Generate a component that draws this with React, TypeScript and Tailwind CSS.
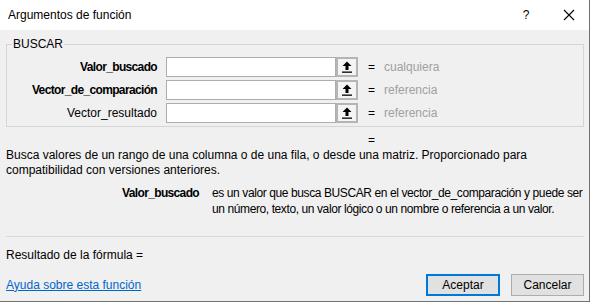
const RefButton = () => (
  <div className="w-[22px] h-full border-2 border-[#b5b5b5] bg-[#f4f4f4] flex items-center justify-center">
    <svg width="10" height="12" viewBox="0 0 10 12">
      <path d="M5 0.5 L9.5 5 L6.5 5 L6.5 9 L3.5 9 L3.5 5 L0.5 5 Z" fill="#000" />
      <rect x="0" y="10.5" width="10" height="1.3" fill="#000" />
    </svg>
  </div>
);

const ArgRow = ({ label, bold, value }: { label: string; bold?: boolean; value: string }) => (
  <div className="flex items-center h-[20px]">
    <div className={`w-[150px] text-right ${bold ? "font-bold tracking-[-0.65px]" : ""}`}>{label}</div>
    <div className="ml-[9px] flex h-full">
      <div className="w-[170px] h-full border border-[#adadad] bg-white" />
      <RefButton />
    </div>
    <div className="ml-[10px] w-[16px]">=</div>
    <div className="text-[#a0a0a0]">{value}</div>
  </div>
);

export default function App() {
  return (
    <div className="w-[593px] h-[305px] bg-white overflow-hidden font-['Liberation_Sans',Arial,sans-serif] text-[12px] leading-[15px] text-black">
      <div className="w-[590px] h-[302px] border-r border-b border-[#707070] flex flex-col bg-[#f0f0f0]">
        <div className="h-[30px] shrink-0 bg-white flex items-center pl-[8px] pr-[14px]">
          <span className="flex-1">Argumentos de función</span>
          <span className="w-[10px] text-center">?</span>
          <svg className="ml-[32px]" width="12" height="12" viewBox="0 0 12 12">
            <path d="M1 1 L11 11 M11 1 L1 11" stroke="#000" strokeWidth="1.1" />
          </svg>
        </div>
        <div className="px-[6px] flex flex-col">
          <fieldset className="mt-[6px] border border-[#d5d5d5] pb-[3px] w-[578px]">
            <legend className="ml-[5px] px-[1px] leading-[16px]">BUSCAR</legend>
            <div className="flex flex-col gap-[3px] mt-[5px]">
              <ArgRow label="Valor_buscado" bold value="cualquiera" />
              <ArgRow label="Vector_de_comparación" bold value="referencia" />
              <ArgRow label="Vector_resultado" value="referencia" />
            </div>
          </fieldset>
          <div className="pl-[362px] mt-[6px]">=</div>
          <p className="whitespace-nowrap">
            Busca valores de un rango de una columna o de una fila, o desde una matriz. Proporcionado para
            <br />
            compatibilidad con versiones anteriores.
          </p>
          <div className="flex mt-[7px]">
            <div className="w-[193px] text-right font-bold tracking-[-0.65px] leading-[16px]">Valor_buscado</div>
            <p className="ml-[13px] leading-[16px] whitespace-nowrap tracking-[-0.4px]">
              es un valor que busca BUSCAR en el vector_de_comparación y puede ser
              <br />
              un número, texto, un valor lógico o un nombre o referencia a un valor.
            </p>
          </div>
          <div className="mt-[19px] h-px bg-[#d9d9d9] w-[578px]" />
          <div className="mt-[11px]">Resultado de la fórmula =</div>
          <div className="flex items-center justify-between mt-[11px] w-[578px]">
            <a className="text-[#0066cc] underline" href="#">Ayuda sobre esta función</a>
            <div className="flex gap-[11px]">
              <button className="w-[74px] h-[22px] border-2 border-[#0078d7] bg-[#e1e1e1]">Aceptar</button>
              <button className="w-[73px] h-[22px] border border-[#adadad] bg-[#e1e1e1]">Cancelar</button>
            </div>
          </div>
        </div>
      </div>
    </div>
  );
}
